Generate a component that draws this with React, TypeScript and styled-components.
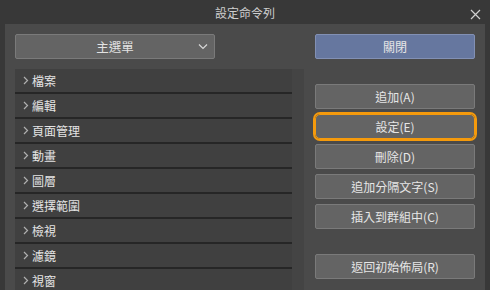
import styled, { createGlobalStyle } from "styled-components";

const GlobalStyle = createGlobalStyle`
    html, body {
        margin: 0;
        padding: 0;
        background: #383838;
    }
    body {
        font-family: "Noto Sans CJK TC", "Liberation Sans", sans-serif;
        font-size: 12px;
        color: #e2e2e2;
    }
`;

const Window = styled.div`
    width: 490px;
    height: 290px;
    background: #383838;
    display: flex;
    flex-direction: column;
    overflow: hidden;
`;

const TitleBar = styled.div`
    height: 24px;
    flex-shrink: 0;
    display: flex;
    align-items: center;
    justify-content: center;
    position: relative;
    color: #cfcfcf;
    font-size: 12px;
`;

const CloseX = styled.div`
    position: absolute;
    right: 9px;
    top: 6px;
    width: 11px;
    height: 11px;
`;

const Panel = styled.div`
    flex: 1;
    margin: 0 5px;
    background: #4a4a4a;
    display: grid;
    grid-template-columns: 289px 160px;
    column-gap: 11px;
    padding: 10px 10px 0 10px;
`;

const LeftCol = styled.div`
    display: flex;
    flex-direction: column;
    gap: 10px;
`;

const Dropdown = styled.div`
    width: 200px;
    height: 25px;
    box-sizing: border-box;
    background: #646464;
    border: 1px solid #7a7a7a;
    border-radius: 2px;
    display: flex;
    align-items: center;
    justify-content: center;
    position: relative;
    font-size: 12.5px;
`;

const DropArrow = styled.svg`
    position: absolute;
    right: 6px;
    top: 8px;
`;

const List = styled.div`
    flex: 1;
    display: flex;
    background: #434343;
`;

const Rows = styled.div`
    width: 277px;
    background: #404040;
    display: flex;
    flex-direction: column;
`;

const Row = styled.div`
    height: 23px;
    flex-shrink: 0;
    border-bottom: 2px solid #262626;
    display: flex;
    align-items: center;
    padding-left: 8px;
    gap: 3px;
    font-size: 12px;
    color: #e4e4e4;
`;

const Scroll = styled.div`
    width: 12px;
    background: #444444;
`;

const RightCol = styled.div`
    display: flex;
    flex-direction: column;
`;

const Button = styled.div<{ $primary?: boolean; $focused?: boolean; $gap?: number }>`
    height: 25px;
    box-sizing: border-box;
    margin-top: ${p => p.$gap ?? 5}px;
    background: ${p => (p.$primary ? "#66779f" : "#646464")};
    border: 1px solid ${p => (p.$primary ? "#8290b4" : "#7a7a7a")};
    border-radius: 2px;
    display: flex;
    align-items: center;
    justify-content: center;
    font-size: 12px;
    color: #e6e6e6;
    outline: ${p => (p.$focused ? "2.5px solid #f59a0c" : "none")};
    outline-offset: 0px;
    ${p => p.$focused && "border-color: #f59a0c; border-radius: 5px;"}
`;

const Chevron = () => (
    <svg width="6" height="9" viewBox="0 0 6 9">
        <path d="M1 1 L4.5 4.5 L1 8" fill="none" stroke="#b0b0b0" strokeWidth="1.2" />
    </svg>
);

const items = ["檔案", "編輯", "頁面管理", "動畫", "圖層", "選擇範圍", "檢視", "濾鏡", "視窗"];

export default function App() {
    return (
        <Window>
            <GlobalStyle />
            <TitleBar>
                設定命令列
                <CloseX>
                    <svg width="11" height="11" viewBox="0 0 11 11">
                        <path d="M1 1 L10 10 M10 1 L1 10" stroke="#d0d0d0" strokeWidth="1.2" />
                    </svg>
                </CloseX>
            </TitleBar>
            <Panel>
                <LeftCol>
                    <Dropdown>
                        主選單
                        <DropArrow width="10" height="7" viewBox="0 0 10 7">
                            <path d="M1 1.5 L5 5.5 L9 1.5" fill="none" stroke="#d8d8d8" strokeWidth="1.2" />
                        </DropArrow>
                    </Dropdown>
                    <List>
                        <Rows>
                            {items.map(item => (
                                <Row key={item}>
                                    <Chevron />
                                    {item}
                                </Row>
                            ))}
                        </Rows>
                        <Scroll />
                    </List>
                </LeftCol>
                <RightCol>
                    <Button $primary $gap={0}>關閉</Button>
                    <Button $gap={25}>追加(A)</Button>
                    <Button $focused>設定(E)</Button>
                    <Button>刪除(D)</Button>
                    <Button>追加分隔文字(S)</Button>
                    <Button>插入到群組中(C)</Button>
                    <Button $gap={25}>返回初始佈局(R)</Button>
                </RightCol>
            </Panel>
        </Window>
    );
}
